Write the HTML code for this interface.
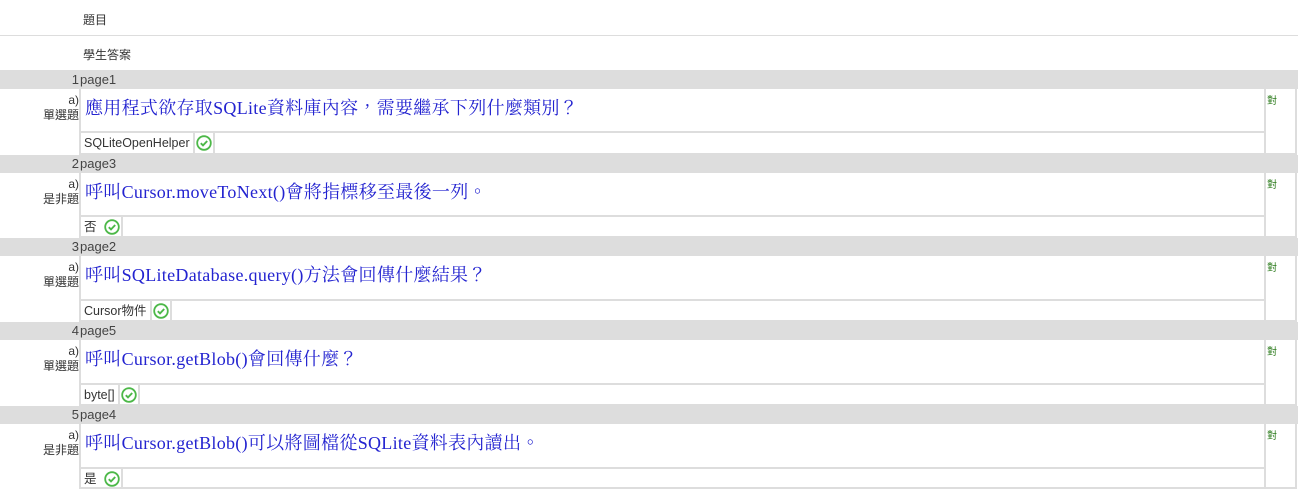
<!DOCTYPE html>
<html><head><meta charset="utf-8"><style>
*{margin:0;padding:0;box-sizing:border-box}
body{width:1298px;height:490px;background:#fff;position:relative;overflow:hidden;font-family:"Liberation Sans","Noto Sans CJK TC",sans-serif;color:#333;font-size:12px}
.a{position:absolute}
.hdr{left:0;width:1298px;border-bottom:1px solid #ddd}
.bar{left:0;width:1298px;height:18px;background:#ddd;font-size:13px;color:#444;line-height:18px}
.q{left:79px;width:1187px;border:2px solid #ddd;border-top:none;background:#fff}
.r{left:1265px;width:32px;border:2px solid #ddd;border-top:none;border-left-width:1px}
.qt{font-family:"Liberation Serif","Noto Serif CJK TC",serif;font-size:18px;color:#2323d0;white-space:nowrap;letter-spacing:0.3px}
.ans{height:22px;border-top:2px solid #ddd;display:flex}
.ans .t{border-right:2px solid #ddd;padding:2px 3px;font-size:12.5px;line-height:17px;color:#333}
.ans .i{border-right:2px solid #ddd;width:20px;display:flex;align-items:center;justify-content:center}
.lab{right:1219px;text-align:right;font-size:12px;line-height:15px;color:#333}
.ok{color:#2a7a1a;font-size:10px}
</style></head><body>
<div class="a hdr" style="top:0;height:36px"><span class="a" style="left:83px;top:11px">題目</span></div>
<div class="a hdr" style="top:36px;height:35px"><span class="a" style="left:83px;top:10px">學生答案</span></div>

<div class="a bar" style="top:71px"><span class="a" style="right:1219px">1</span><span class="a" style="left:80px">page1</span></div>
<div class="a lab" style="top:93px">a)<br>單選題</div>
<div class="a q" style="top:89px;height:66px"><div class="qt" style="padding:5px 4px 0;height:42px">應用程式欲存取SQLite資料庫內容，需要繼承下列什麼類別？</div><div class="ans"><div class="t">SQLiteOpenHelper</div><div class="i"><svg width="16" height="16" viewBox="0 0 16 16"><circle cx="8" cy="8" r="6.8" fill="none" stroke="#4cb848" stroke-width="1.8"/><path d="M4.8 8.2l2.2 2.2 4.2-4.4" fill="none" stroke="#4cb848" stroke-width="1.9"/></svg></div></div></div>
<div class="a r" style="top:89px;height:66px"><span class="a ok" style="left:1px;top:3px">對</span></div>

<div class="a bar" style="top:155px"><span class="a" style="right:1219px">2</span><span class="a" style="left:80px">page3</span></div>
<div class="a lab" style="top:177px">a)<br>是非題</div>
<div class="a q" style="top:173px;height:65px"><div class="qt" style="padding:5px 4px 0;height:42px">呼叫Cursor.moveToNext()會將指標移至最後一列。</div><div class="ans"><div class="t" style="border:none;width:22px">否</div><div class="i"><svg width="16" height="16" viewBox="0 0 16 16"><circle cx="8" cy="8" r="6.8" fill="none" stroke="#4cb848" stroke-width="1.8"/><path d="M4.8 8.2l2.2 2.2 4.2-4.4" fill="none" stroke="#4cb848" stroke-width="1.9"/></svg></div></div></div>
<div class="a r" style="top:173px;height:65px"><span class="a ok" style="left:1px;top:3px">對</span></div>

<div class="a bar" style="top:238px"><span class="a" style="right:1219px">3</span><span class="a" style="left:80px">page2</span></div>
<div class="a lab" style="top:260px">a)<br>單選題</div>
<div class="a q" style="top:256px;height:66px"><div class="qt" style="padding:5px 4px 0;height:43px">呼叫SQLiteDatabase.query()方法會回傳什麼結果？</div><div class="ans"><div class="t">Cursor物件</div><div class="i"><svg width="16" height="16" viewBox="0 0 16 16"><circle cx="8" cy="8" r="6.8" fill="none" stroke="#4cb848" stroke-width="1.8"/><path d="M4.8 8.2l2.2 2.2 4.2-4.4" fill="none" stroke="#4cb848" stroke-width="1.9"/></svg></div></div></div>
<div class="a r" style="top:256px;height:66px"><span class="a ok" style="left:1px;top:3px">對</span></div>

<div class="a bar" style="top:322px"><span class="a" style="right:1219px">4</span><span class="a" style="left:80px">page5</span></div>
<div class="a lab" style="top:344px">a)<br>單選題</div>
<div class="a q" style="top:340px;height:66px"><div class="qt" style="padding:5px 4px 0;height:43px">呼叫Cursor.getBlob()會回傳什麼？</div><div class="ans"><div class="t">byte[]</div><div class="i"><svg width="16" height="16" viewBox="0 0 16 16"><circle cx="8" cy="8" r="6.8" fill="none" stroke="#4cb848" stroke-width="1.8"/><path d="M4.8 8.2l2.2 2.2 4.2-4.4" fill="none" stroke="#4cb848" stroke-width="1.9"/></svg></div></div></div>
<div class="a r" style="top:340px;height:66px"><span class="a ok" style="left:1px;top:3px">對</span></div>

<div class="a bar" style="top:406px"><span class="a" style="right:1219px">5</span><span class="a" style="left:80px">page4</span></div>
<div class="a lab" style="top:428px">a)<br>是非題</div>
<div class="a q" style="top:424px;height:65px"><div class="qt" style="padding:5px 4px 0;height:43px">呼叫Cursor.getBlob()可以將圖檔從SQLite資料表內讀出。</div><div class="ans"><div class="t" style="border:none;width:22px">是</div><div class="i"><svg width="16" height="16" viewBox="0 0 16 16"><circle cx="8" cy="8" r="6.8" fill="none" stroke="#4cb848" stroke-width="1.8"/><path d="M4.8 8.2l2.2 2.2 4.2-4.4" fill="none" stroke="#4cb848" stroke-width="1.9"/></svg></div></div></div>
<div class="a r" style="top:424px;height:65px"><span class="a ok" style="left:1px;top:3px">對</span></div>
</body></html>
